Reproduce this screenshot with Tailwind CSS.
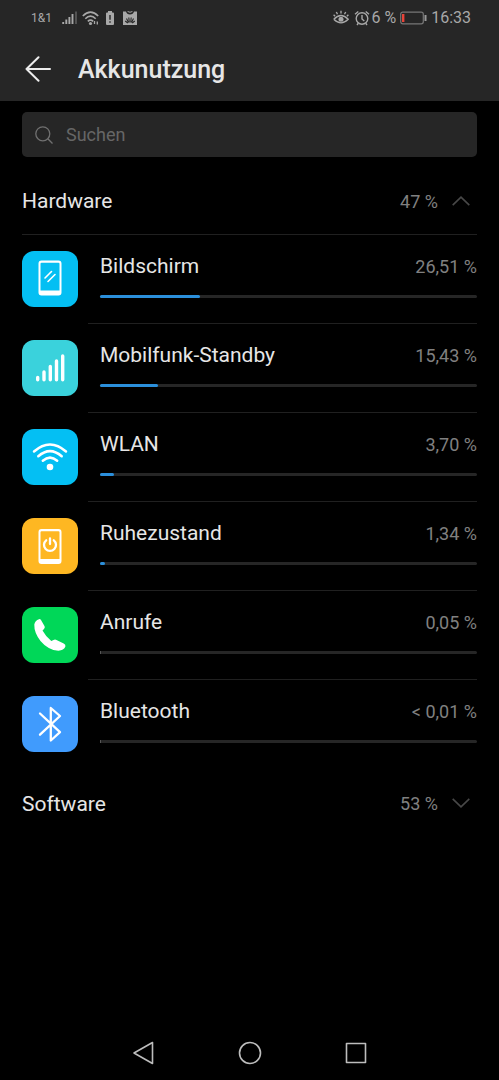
<!DOCTYPE html>
<html lang="de">
<head>
<meta charset="utf-8">
<meta name="viewport" content="width=device-width, initial-scale=1">
<title>Akkunutzung</title>
<script src="https://cdn.jsdelivr.net/npm/@tailwindcss/browser@4"></script>
</head>
<body class="flex min-h-screen flex-col bg-black font-['Roboto',sans-serif] text-[#e6e6e6]">
<header class="bg-[#262626]">
  <div class="flex h-9 items-center justify-between pr-7 pl-[31px] text-[#a8a8a8]">
    <div class="flex items-center">
      <span class="text-xs">1&amp;1</span>
      <svg class="ml-[10px] h-4 w-4" viewBox="0 0 16 16" fill="none" stroke="currentColor" stroke-width="1.9" aria-label="Mobilfunk"><path d="M1.200 12v2M4.300 9.500v4.500M7.400 7v7M10.500 4v10"/><path d="M14 1.500v12.500" stroke="#555"/></svg>
      <svg class="ml-1 h-4 w-[18px]" viewBox="0 0 18 16" fill="none" stroke="currentColor" stroke-width="1.6" aria-label="WLAN"><path d="M.8 6Q8.500-1.800 16.200 6M3.300 8.700Q8.500 3.500 13.700 8.700M5.800 11.300Q8.500 9 11.200 11.300"/><circle cx="8.500" cy="13.500" r="1.600" fill="currentColor" stroke="none"/><path d="M12.500 11v3M15.300 11.500v3" stroke-width="1.300"/></svg>
      <svg class="ml-[6px] h-4 w-2" viewBox="0 0 8 16" aria-label="Akku schwach"><path fill="currentColor" d="M2 1h4v1.500h1q1 0 1 1V14q0 1-1 1H1q-1 0-1-1V3.500q0-1 1-1h1z"/><path stroke="#262626" stroke-width="1.400" d="M4 5v4.800M4 11.200v1.500"/></svg>
      <svg class="ml-[9px] h-4 w-[14px]" viewBox="0 0 14 16" aria-label="AppGallery"><path fill="currentColor" d="M0 1.500h3q.8 3 4 3t4-3h3V15H0z"/><path fill="none" stroke="currentColor" d="M4.600 1.500q2.400 1.500 4.800 0"/><path stroke="#262626" stroke-width="1.100" d="M6.300 12.500 5.800 7.500M5.500 12.500 3.500 8.500M4.800 13 2.200 11M7.700 12.500l.5-5M8.500 12.500l2-4M9.200 13l2.600-2"/></svg>
    </div>
    <div class="flex items-center text-base">
      <svg class="h-4 w-4" viewBox="0 0 16 16" fill="none" stroke="currentColor" stroke-width="1.400" aria-label="Augen schonen"><path d="M.8 9.300Q8 1.800 15.200 9.300 8 16.500.8 9.300M8 .8v2.700M3.300 2l1.200 2.300M12.700 2l-1.200 2.300M.6 4.800l1.500 1.500M15.400 4.800l-1.500 1.500"/><circle cx="8" cy="9.200" r="2.500" fill="currentColor" stroke="none"/></svg>
      <svg class="ml-[5px] h-4 w-4" viewBox="0 0 16 16" fill="none" stroke="currentColor" stroke-width="1.400" aria-label="Wecker"><circle cx="8" cy="8.500" r="5.800"/><path d="M8 5v4l2.300 2M1 4.300 4.300 1.500M15 4.300l-3.300-2.800M4.300 13.300 3 15M11.700 13.300 13 15"/></svg>
      <span class="ml-px">6 %</span>
      <svg class="ml-1 h-[14px] w-[27px]" viewBox="0 0 27 14" fill="none" aria-label="Akku"><rect x=".7" y="1.200" width="22.600" height="11.600" rx="2" stroke="#777" stroke-width="1.200"/><path d="M25.500 4v6" stroke="#999" stroke-width="2"/><path d="M3.200 3v8" stroke="#e84338" stroke-width="2.400"/></svg>
      <span class="ml-1">16:33</span>
    </div>
  </div>
  <div class="flex h-[65px] items-center px-[25px]">
    <button aria-label="Zurück"><svg class="h-[26px] w-[26px]" viewBox="0 0 26 26" fill="none" stroke="#ededed" stroke-width="2" stroke-linecap="round" stroke-linejoin="round"><path d="M13.500 1.200 1.500 13l12 11.800M1.500 13H25"/></svg></button>
    <h1 class="ml-[27px] pt-0.5 text-[25px] font-medium">Akkunutzung</h1>
  </div>
</header>
<main class="px-[22px] pt-[11px]">
  <label class="flex h-[45px] items-center rounded-[5px] bg-[#262626] px-[13px]">
    <svg class="h-[18px] w-[18px]" viewBox="0 0 18 18" fill="none" stroke="#707070" stroke-width="1.300"><circle cx="7.800" cy="7.800" r="7"/><path d="m12.800 12.800 4.700 4.700"/></svg>
    <input type="search" aria-label="Suchen" placeholder="Suchen" class="ml-[13px] min-w-0 flex-1 bg-transparent text-lg outline-none placeholder:text-[#666]">
  </label>
  <section class="mt-[10px]">
    <button aria-expanded="true" class="flex h-[68px] w-full items-center border-b border-[#202020]">
      <span class="flex-1 pt-[3px] text-left text-[21px]">Hardware</span><span class="pt-0.5 text-lg text-[#808080]">47 %</span>
      <svg class="mr-[7px] ml-[14px] h-[10px] w-[18px]" viewBox="0 0 18 10" fill="none" stroke="#484848" stroke-width="1.600"><path d="m.7 9.200 8.300-8 8.300 8"/></svg>
    </button>
    <ul>
      <li class="flex h-[89px]">
        <svg class="mt-4 h-14 w-14 shrink-0" viewBox="0 0 56 56" fill="none"><rect width="56" height="56" rx="12" fill="#04bff3"/><path fill="#fff" fill-rule="evenodd" d="M19.500 9.500h17q3 0 3 3v29q0 3-3 3h-17q-3 0-3-3v-29q0-3 3-3m0 2.200q-1 0-1 1V39.500h19V12.700q0-1-1-1z"/><path stroke="#fff" stroke-width="1.600" stroke-linecap="round" d="m23 27 6.500-6.500M26 30.500l7-7"/></svg>
        <div class="ml-[10px] flex-1 border-b border-[#202020] pt-5 pl-3">
          <div class="flex h-6 items-center justify-between"><span class="text-[21px]">Bildschirm</span><span class="text-lg text-[#808080]">26,51 %</span></div>
          <div class="mt-4 h-[3px] rounded-sm bg-[#262626]"><div class="h-full rounded-sm bg-[#2b8fdb]" style="width:26.51%"></div></div>
        </div>
      </li>
      <li class="flex h-[89px]">
        <svg class="mt-4 h-14 w-14 shrink-0" viewBox="0 0 56 56" fill="none"><rect width="56" height="56" rx="12" fill="#3ad2dc"/><path stroke="#fff" stroke-width="3.400" stroke-linecap="round" d="M15.700 37.500v2.200M22 32v7.700M28.300 26.500v13.200M34.500 21v18.700M40.700 16v23.700"/></svg>
        <div class="ml-[10px] flex-1 border-b border-[#202020] pt-5 pl-3">
          <div class="flex h-6 items-center justify-between"><span class="text-[21px]">Mobilfunk-Standby</span><span class="text-lg text-[#808080]">15,43 %</span></div>
          <div class="mt-4 h-[3px] rounded-sm bg-[#262626]"><div class="h-full rounded-sm bg-[#2b8fdb]" style="width:15.43%"></div></div>
        </div>
      </li>
      <li class="flex h-[89px]">
        <svg class="mt-4 h-14 w-14 shrink-0" viewBox="0 0 56 56" fill="none"><rect width="56" height="56" rx="12" fill="#04bff3"/><path stroke="#fff" stroke-width="2.500" stroke-linecap="round" d="M12 22.500Q28 8.500 44 22.500M16.300 27.300Q28 17 39.700 27.300M20.800 31.800Q28 25.500 35.200 31.800"/><circle cx="28" cy="38" r="3.300" fill="#fff"/></svg>
        <div class="ml-[10px] flex-1 border-b border-[#202020] pt-5 pl-3">
          <div class="flex h-6 items-center justify-between"><span class="text-[21px]">WLAN</span><span class="text-lg text-[#808080]">3,70 %</span></div>
          <div class="mt-4 h-[3px] rounded-sm bg-[#262626]"><div class="h-full rounded-sm bg-[#2b8fdb]" style="width:3.70%"></div></div>
        </div>
      </li>
      <li class="flex h-[89px]">
        <svg class="mt-4 h-14 w-14 shrink-0" viewBox="0 0 56 56" fill="none"><rect width="56" height="56" rx="12" fill="#feb722"/><path fill="#fff" fill-rule="evenodd" d="M19.500 11h17q3 0 3 3v29q0 3-3 3h-17q-3 0-3-3V14q0-3 3-3m0 2.200q-1 0-1 1V41h19V14.200q0-1-1-1z"/><path stroke="#fff" stroke-width="2.300" stroke-linecap="round" d="M28 20.500v5.500M24.200 22.300a6 6 0 1 0 7.600 0"/></svg>
        <div class="ml-[10px] flex-1 border-b border-[#202020] pt-5 pl-3">
          <div class="flex h-6 items-center justify-between"><span class="text-[21px]">Ruhezustand</span><span class="text-lg text-[#808080]">1,34 %</span></div>
          <div class="mt-4 h-[3px] rounded-sm bg-[#262626]"><div class="h-full rounded-sm bg-[#2b8fdb]" style="width:1.34%"></div></div>
        </div>
      </li>
      <li class="flex h-[89px]">
        <svg class="mt-4 h-14 w-14 shrink-0" viewBox="0 0 56 56"><rect width="56" height="56" rx="12" fill="#00d758"/><path fill="#fff" d="M17 12.200q1.200-.4 2 .8l3.600 6.200q.6 1.600-.6 2.700l-1.500 1.700q3.500 6.400 8.800 10.400l2.200-1q1.600-.8 3 0l7.200 3.500q2.200 1 1.700 3-1.500 3.700-7 4.300Q26 43 18.500 34 12 25.500 12.300 17.500q.7-4 4.700-5.300"/></svg>
        <div class="ml-[10px] flex-1 border-b border-[#202020] pt-5 pl-3">
          <div class="flex h-6 items-center justify-between"><span class="text-[21px]">Anrufe</span><span class="text-lg text-[#808080]">0,05 %</span></div>
          <div class="mt-4 h-[3px] rounded-sm bg-[#262626]"><div class="h-full w-px bg-[#555]"></div></div>
        </div>
      </li>
      <li class="flex h-[89px]">
        <svg class="mt-4 h-14 w-14 shrink-0" viewBox="0 0 56 56" fill="none"><rect width="56" height="56" rx="12" fill="#409bfd"/><path stroke="#fff" stroke-width="2.300" stroke-linecap="round" stroke-linejoin="round" d="m18 17.500 20 18.700-9.200 8.300V12l9.200 8L18 38.700"/></svg>
        <div class="ml-[10px] flex-1 pt-5 pl-3">
          <div class="flex h-6 items-center justify-between"><span class="text-[21px]">Bluetooth</span><span class="text-lg text-[#808080]">&lt; 0,01 %</span></div>
          <div class="mt-4 h-[3px] rounded-sm bg-[#262626]"><div class="h-full w-px bg-[#555]"></div></div>
        </div>
      </li>
    </ul>
  </section>
  <button aria-expanded="false" class="flex h-[68px] w-full items-center">
    <span class="flex-1 pt-[3px] text-left text-[21px]">Software</span><span class="pt-0.5 text-lg text-[#808080]">53 %</span>
    <svg class="mr-[7px] ml-[14px] h-[10px] w-[18px]" viewBox="0 0 18 10" fill="none" stroke="#484848" stroke-width="1.600"><path d="m.7.800 8.300 8 8.300-8"/></svg>
  </button>
</main>
<nav class="mt-auto flex h-[55px] items-center justify-center">
  <button aria-label="Zurück" class="flex w-[106px] justify-center"><svg class="h-6 w-6" viewBox="0 0 24 24" fill="none" stroke="#bdbdbd" stroke-width="1.600" stroke-linejoin="round"><path d="M20.500 1.500v21L2 12z"/></svg></button>
  <button aria-label="Startbildschirm" class="flex w-[106px] justify-center"><svg class="h-6 w-6" viewBox="0 0 24 24" fill="none" stroke="#bdbdbd" stroke-width="1.600"><circle cx="12" cy="12" r="10.500"/></svg></button>
  <button aria-label="Letzte Apps" class="flex w-[106px] justify-center"><svg class="h-6 w-6" viewBox="0 0 24 24" fill="none" stroke="#bdbdbd" stroke-width="1.600" stroke-linejoin="round"><path d="M2.500 2.500h19v19h-19z"/></svg></button>
</nav>
</body>
</html>
